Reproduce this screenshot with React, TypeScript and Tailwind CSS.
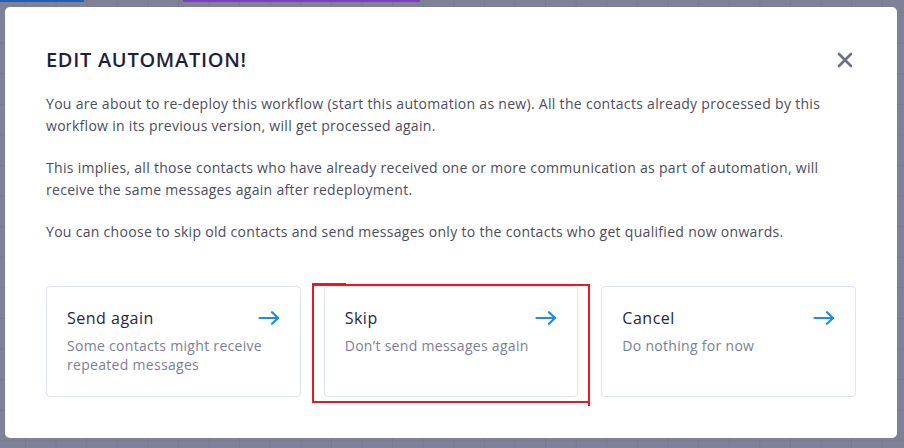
import React from "react";

const Arrow = () => (
  <svg width="22" height="14" viewBox="0 0 22 14" fill="none" stroke="#1b8cf5" strokeWidth="2.2" strokeLinecap="round" strokeLinejoin="round">
    <path d="M1.5 7h18.5" />
    <path d="M14 1.2l6 5.8-6 5.8" />
  </svg>
);

const Card = ({ title, desc }: { title: string; desc: React.ReactNode }) => (
  <div className="w-[255px] h-[111px] border border-[#dfe3f0] rounded-[4px] bg-white px-[20px] pt-[19px]">
    <div className="flex items-center justify-between">
      <span className="text-[16px] leading-[24px] font-medium text-[#25263f] tracking-[0.5px]">{title}</span>
      <Arrow />
    </div>
    <div className="mt-[6px] text-[14px] leading-[19px] text-[#7b7e95] tracking-[0.3px]">{desc}</div>
  </div>
);

export default function App() {
  return (
    <div
      className="relative w-[904px] h-[448px] overflow-hidden bg-[#7f8198] bg-[linear-gradient(to_right,rgba(60,62,90,0.10)_1px,transparent_1px),linear-gradient(to_bottom,rgba(60,62,90,0.10)_1px,transparent_1px)] bg-[size:30.6px_30.6px] bg-[position:25px_12px] pl-[5px] pt-[7px]"
      style={{ fontFamily: "'Open Sans', 'Noto Sans', sans-serif" }}
    >
      <div className="absolute left-0 top-0 w-[84px] h-[2px] bg-[#1f5fb5]" />
      <div className="absolute left-[183px] top-0 w-[237px] h-[2px] bg-[#7a3fc0]" />

      <div className="relative w-[892px] h-[431px] bg-white rounded-[5px] pl-[41px] pr-[41px] pt-[39px]">
        <div className="flex items-center justify-between">
          <h1 className="text-[20px] leading-[28px] font-semibold text-[#1e1f3d] tracking-[0.7px]">EDIT AUTOMATION!</h1>
          <svg width="16" height="16" viewBox="0 0 16 16" className="mr-[3px]" stroke="#6c6e8c" strokeWidth="2.6" strokeLinecap="round">
            <path d="M2 2l12 12M14 2L2 14" />
          </svg>
        </div>

        <div className="mt-[19px] text-[14px] leading-[22px] text-[#4b4c5e] flex flex-col gap-[20px] tracking-[0.3px]">
          <p>
            You are about to re-deploy this workflow (start this automation as new). All the contacts already processed by this
            <br />
            workflow in its previous version, will get processed again.
          </p>
          <p>
            This implies, all those contacts who have already received one or more communication as part of automation, will
            <br />
            receive the same messages again after redeployment.
          </p>
          <p>You can choose to skip old contacts and send messages only to the contacts who get qualified now onwards.</p>
        </div>

        <div className="mt-[43px] flex gap-[23px]">
          <Card title="Send again" desc={<>Some contacts might receive<br />repeated messages</>} />
          <Card title="Skip" desc="Don’t send messages again" />
          <Card title="Cancel" desc="Do nothing for now" />
        </div>
      </div>

      <div className="absolute left-[312px] top-[284px] w-[278px] h-[119px] border-2 border-[#e8191f]" />
      <div className="absolute left-[312px] top-[283px] w-[34px] h-[2px] bg-[#e8191f]" />
      <div className="absolute left-[588px] top-[400px] w-[2px] h-[6px] bg-[#e8191f]" />
    </div>
  );
}
